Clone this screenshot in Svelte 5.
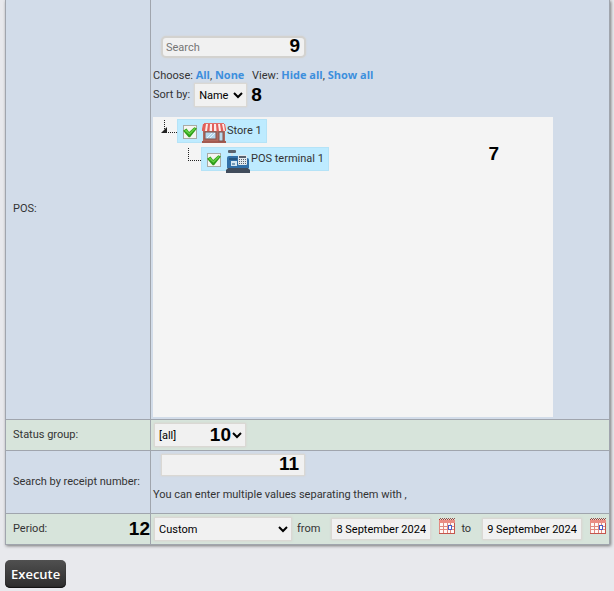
<script lang="ts">
  let search = $state('');
  let sortBy = $state('Name');
  let statusGroup = $state('[all]');
  let receipt = $state('');
  let period = $state('Custom');
  let dateFrom = $state('8 September 2024');
  let dateTo = $state('9 September 2024');
  let storeChecked = $state(true);
  let terminalChecked = $state(true);

  function setAll(value: boolean) {
    storeChecked = value;
    terminalChecked = value;
  }
</script>

{#snippet tick()}
  <svg class="tick" viewBox="0 0 16 16" aria-hidden="true">
    <path d="M0 6.500 L4 4 L7 8 L13 2.500 L16 4 L8 14 L6.500 14 Z" fill="#2f9d1a" />
    <path d="M1.500 6.500 L4 5 L7 9 L13 3.500 L14.500 4.300 L7.500 11 Z" fill="#62d243" />
  </svg>
{/snippet}

{#snippet calendar(label: string)}
  <button type="button" class="cal" aria-label={label}>
    <svg viewBox="0 0 16 16" aria-hidden="true">
      <rect x="0" y="2" width="16" height="14" fill="#e08a80" />
      <rect x="0" y="2" width="16" height="3" fill="#ea8d84" />
      <path d="M0 15.500 H16 M15.500 5 V16" stroke="#c4564d" />
      <path d="M0 1.500 H16" stroke="#b3322c" stroke-dasharray="1 1" />
      <path d="M0 .5 H16" stroke="#8f5450" stroke-dasharray="1 1" stroke-dashoffset="1" />
      <g fill="#fff7f5">
        {#each [5, 9, 12] as y}
          {#each [1, 5, 9, 12] as x}
            <rect {x} {y} width={x === 9 ? 2 : 3} height={y === 9 ? 2 : 3} />
          {/each}
        {/each}
      </g>
      <rect x="9.500" y="7.500" width="3" height="4" fill="#fff" stroke="#4a5cc6" />
    </svg>
  </button>
{/snippet}

<form class="report" onsubmit={(e) => e.preventDefault()}>
  <table>
    <tbody>
      <!-- POS tree -->
      <tr class="blue">
        <th scope="row" class="pos-label">POS:</th>
        <td class="pos-cell">
          <div class="field search">
            <input type="text" class="rounded" placeholder="Search" aria-label="Search" bind:value={search} />
            <span class="mark inside">9</span>
          </div>
          <p class="line">
            Choose: <a href="#all" onclick={() => setAll(true)}>All</a>, <a href="#none" onclick={() => setAll(false)}>None</a>
            <span class="view">View: <a href="#hide">Hide all</a>, <a href="#show">Show all</a></span>
          </p>
          <div class="line sort">
            <label for="sort">Sort by:</label>
            <select id="sort" bind:value={sortBy}>
              <option>Name</option>
              <option>Code</option>
            </select>
            <span class="mark">8</span>
          </div>

          <div class="tree">
            <span class="mark tree-mark">7</span>
            <ul>
              <li>
                <div class="node">
                  <span class="branch"><i></i></span>
                  <label>
                    <span class="box"><input type="checkbox" bind:checked={storeChecked} />{#if storeChecked}{@render tick()}{/if}</span>
                    <svg class="pic" viewBox="0 0 24 22" aria-hidden="true">
                      <rect x="1" y="7" width="22" height="13" fill="#b0685d" />
                      <rect x="0" y="19" width="24" height="2" fill="#a25a50" />
                      <rect x="3" y="10" width="11" height="7" fill="#b4d6ec" stroke="#80524f" />
                      <path d="M5 16 l5 -5 M8 16 l5 -5" stroke="#e6f4fc" />
                      <rect x="17" y="10" width="4" height="9" fill="#b9d9ec" stroke="#80524f" />
                      <path d="M1 2 H23 L24 7 V9 H0 V7 Z" fill="#fbeae8" />
                      <path d="M1 2 H4 L3 9 H0 V7 Z M6 2 H8 L7.500 9 H5 Z M10 2 H12 V9 H10 Z M14 2 H16 L17 9 H14.500 Z M18 2 H20 L21.500 9 H19 Z M22 2 H23 L24 7 V9 H23 Z" fill="#e2605b" />
                      <rect x="2" y="1" width="20" height="1" fill="#e0716c" />
                    </svg>
                    <span>Store 1</span>
                  </label>
                </div>
                <ul>
                  <li>
                    <div class="node">
                      <span class="branch"></span>
                      <label>
                        <span class="box"><input type="checkbox" bind:checked={terminalChecked} />{#if terminalChecked}{@render tick()}{/if}</span>
                        <svg class="pic" viewBox="0 0 24 24" aria-hidden="true">
                          <rect x="2" y="1" width="8" height="3" rx="1" fill="#59626e" />
                          <rect x="5" y="4" width="2" height="3" fill="#d4e2ea" />
                          <path d="M1 9 Q1 7 3 7 H12 V19 H1 Z" fill="#3270a8" />
                          <rect x="3" y="9" width="8" height="2" fill="#245681" />
                          <rect x="5" y="12" width="6" height="5" fill="#d5e7f2" />
                          <rect x="6" y="14" width="3" height="2" fill="#789cb8" />
                          <path d="M11 9 H21 Q23 9 23 11 V19 H11 Z" fill="#3270a8" />
                          <rect x="12" y="6" width="9" height="10" rx="1" fill="#e2e9ee" />
                          <rect x="13" y="7" width="7" height="2" fill="#59626e" />
                          <path d="M13 10.500 H20 M13 12.500 H20 M13 14.500 H20" stroke="#59626e" stroke-dasharray="1 1" />
                          <path d="M2 19 H22 L24 21 V24 H0 V21 Z" fill="#414c5b" />
                        </svg>
                        <span>POS terminal 1</span>
                      </label>
                    </div>
                  </li>
                </ul>
              </li>
            </ul>
          </div>
        </td>
      </tr>

      <!-- Status group -->
      <tr class="green">
        <th scope="row"><label for="status">Status group:</label></th>
        <td>
          <div class="field status">
            <select id="status" bind:value={statusGroup}>
              <option>[all]</option>
            </select>
            <span class="mark inside">10</span>
          </div>
        </td>
      </tr>

      <!-- Receipt number -->
      <tr class="blue">
        <th scope="row"><label for="receipt">Search by receipt number:</label></th>
        <td class="receipt-cell">
          <div class="field receipt">
            <input id="receipt" type="text" bind:value={receipt} />
            <span class="mark inside">11</span>
          </div>
          <p class="line">You can enter multiple values separating them with ,</p>
        </td>
      </tr>

      <!-- Period -->
      <tr class="green">
        <th scope="row">
          <div class="period-label"><label for="period">Period:</label><span class="mark">12</span></div>
        </th>
        <td>
          <div class="period">
            <select id="period" bind:value={period}>
              <option>Custom</option>
              <option>Today</option>
            </select>
            <label for="from">from</label>
            <input id="from" type="text" bind:value={dateFrom} />
            {@render calendar('Pick start date')}
            <label for="to">to</label>
            <input id="to" type="text" bind:value={dateTo} />
            {@render calendar('Pick end date')}
          </div>
        </td>
      </tr>
    </tbody>
  </table>

  <button type="submit" class="execute">Execute</button>
</form>

<style>
  :global(body) {
    margin: 0;
    background: #e8e9ed;
  }

  .report {
    padding: 0 4px 0 5px;
    font-family: "Trebuchet MS", Roboto, sans-serif;
    font-size: 11px;
    line-height: 16px;
    color: #333;
  }

  table {
    width: 100%;
    border-collapse: collapse;
    border: 1px solid #9a9da3;
    border-top: 0;
    box-shadow: 1px 1px 3px #777;
  }

  th, td {
    box-sizing: border-box;
    border: 1px solid #a0a5ad;
    padding: 0 1px 0 3px;
    text-align: left;
    font-weight: normal;
  }
  tr:first-child > * { border-top: 0; }

  th {
    width: 145px;
    padding: 0 0 0 7px;
    white-space: nowrap;
  }

  .blue { background: #d2dce9; }
  .green { background: #d7e4db; }
  .green td { height: 31px; }

  .pos-label { padding-bottom: 2px; }
  .pos-cell { padding: 36px 2px 2px 2px; }
  .receipt-cell { padding: 3px 2px 10px 2px; }

  .line { margin: 0; }

  a {
    color: #3d8fdd;
    font-family: "Trebuchet MS", "Open Sans", sans-serif;
    font-weight: bold;
    text-decoration: none;
  }

  .view { margin-left: 5px; }

  input[type="text"], select {
    box-sizing: border-box;
    height: 22px;
    margin: 0;
    padding: 0 4px;
    border: 1px solid #dad8d4;
    border-radius: 0;
    outline: 0;
    background-color: #f1f1f1;
    box-shadow: 0 0 2px #d5d2ce;
    font: inherit;
    color: #000;
  }
  select {
    height: 24px;
    padding: 0;
  }
  input.rounded {
    border: 2px solid #d3d2cf;
    border-radius: 5px;
    padding: 0 3px;
  }
  input::placeholder { color: #757575; }

  .mark {
    font-family: "Liberation Sans", Arial, sans-serif;
    font-size: 19px;
    font-weight: bold;
    line-height: 20px;
    color: #000;
  }

  .field { position: relative; }
  .field input, .field select { width: 100%; }
  .inside {
    position: absolute;
    top: 0;
    right: 6px;
    pointer-events: none;
  }

  .search {
    width: 145px;
    margin: 0 0 9px 8px;
  }
  .receipt {
    width: 144px;
    margin: 0 0 11px 8px;
  }
  .status { width: 92px; }
  .status .inside {
    top: 2px;
    right: 15px;
  }

  .sort {
    display: flex;
    align-items: center;
    gap: 4px;
    height: 22px;
  }
  .sort select { width: 53px; }

  /* Tree */
  .tree {
    position: relative;
    box-sizing: border-box;
    max-width: 400px;
    height: 300px;
    margin-top: 11px;
    padding: 2px 0 0 9px;
    background: #f4f4f4;
  }
  .tree-mark {
    position: absolute;
    top: 27px;
    right: 54px;
  }
  ul {
    margin: 0;
    padding: 0;
    list-style: none;
  }
  ul ul { padding: 4px 0 0 24px; }

  .node {
    display: flex;
    height: 24px;
  }
  .node label {
    display: flex;
    align-items: center;
    box-sizing: border-box;
    padding: 0 4px 0 5px;
    border: 1px solid #b5e3f7;
    background: #beebff;
  }
  .branch {
    position: relative;
    box-sizing: border-box;
    width: 13px;
    height: 13px;
    margin: 1px 0 0 2px;
    border-left: 1px dotted #222;
    border-bottom: 1px dotted #222;
  }
  .branch i {
    position: absolute;
    left: -4px;
    bottom: -1px;
    border-left: 6px solid transparent;
    border-bottom: 6px solid #222;
  }

  .box {
    position: relative;
    width: 14px;
    height: 14px;
    margin: 2px 5px 0 0;
  }
  .box input {
    appearance: none;
    display: block;
    box-sizing: border-box;
    width: 14px;
    height: 14px;
    margin: 0;
    border: 1px solid #a9aaa5;
    background: #f5f5f0;
  }
  .tick {
    position: absolute;
    inset: 0;
    width: 14px;
    height: 14px;
    pointer-events: none;
  }
  .pic {
    width: 24px;
    margin: 3px 1px 0 0;
  }

  /* Period row */
  .period-label {
    display: flex;
    align-items: center;
    justify-content: space-between;
  }
  .period {
    display: flex;
    align-items: center;
  }
  .period select { width: 138px; }
  .period input { width: 100px; }
  .period label { margin: 0 11px 0 5px; }
  .cal {
    flex: none;
    width: 16px;
    height: 16px;
    margin: 0 1px 6px 8px;
    padding: 0;
    border: 0;
    background: none;
  }
  .cal svg {
    display: block;
    width: 16px;
    height: 16px;
  }

  .execute {
    display: block;
    height: 28px;
    margin-top: 15px;
    padding: 0 6px;
    border: 0;
    border-radius: 5px;
    background: linear-gradient(#505050, #2c2c2c);
    box-shadow: inset 0 -1px 1px #111;
    font-family: "Trebuchet MS", "Open Sans", sans-serif;
    font-size: 13px;
    font-weight: 600;
    color: #fff;
  }
</style>
